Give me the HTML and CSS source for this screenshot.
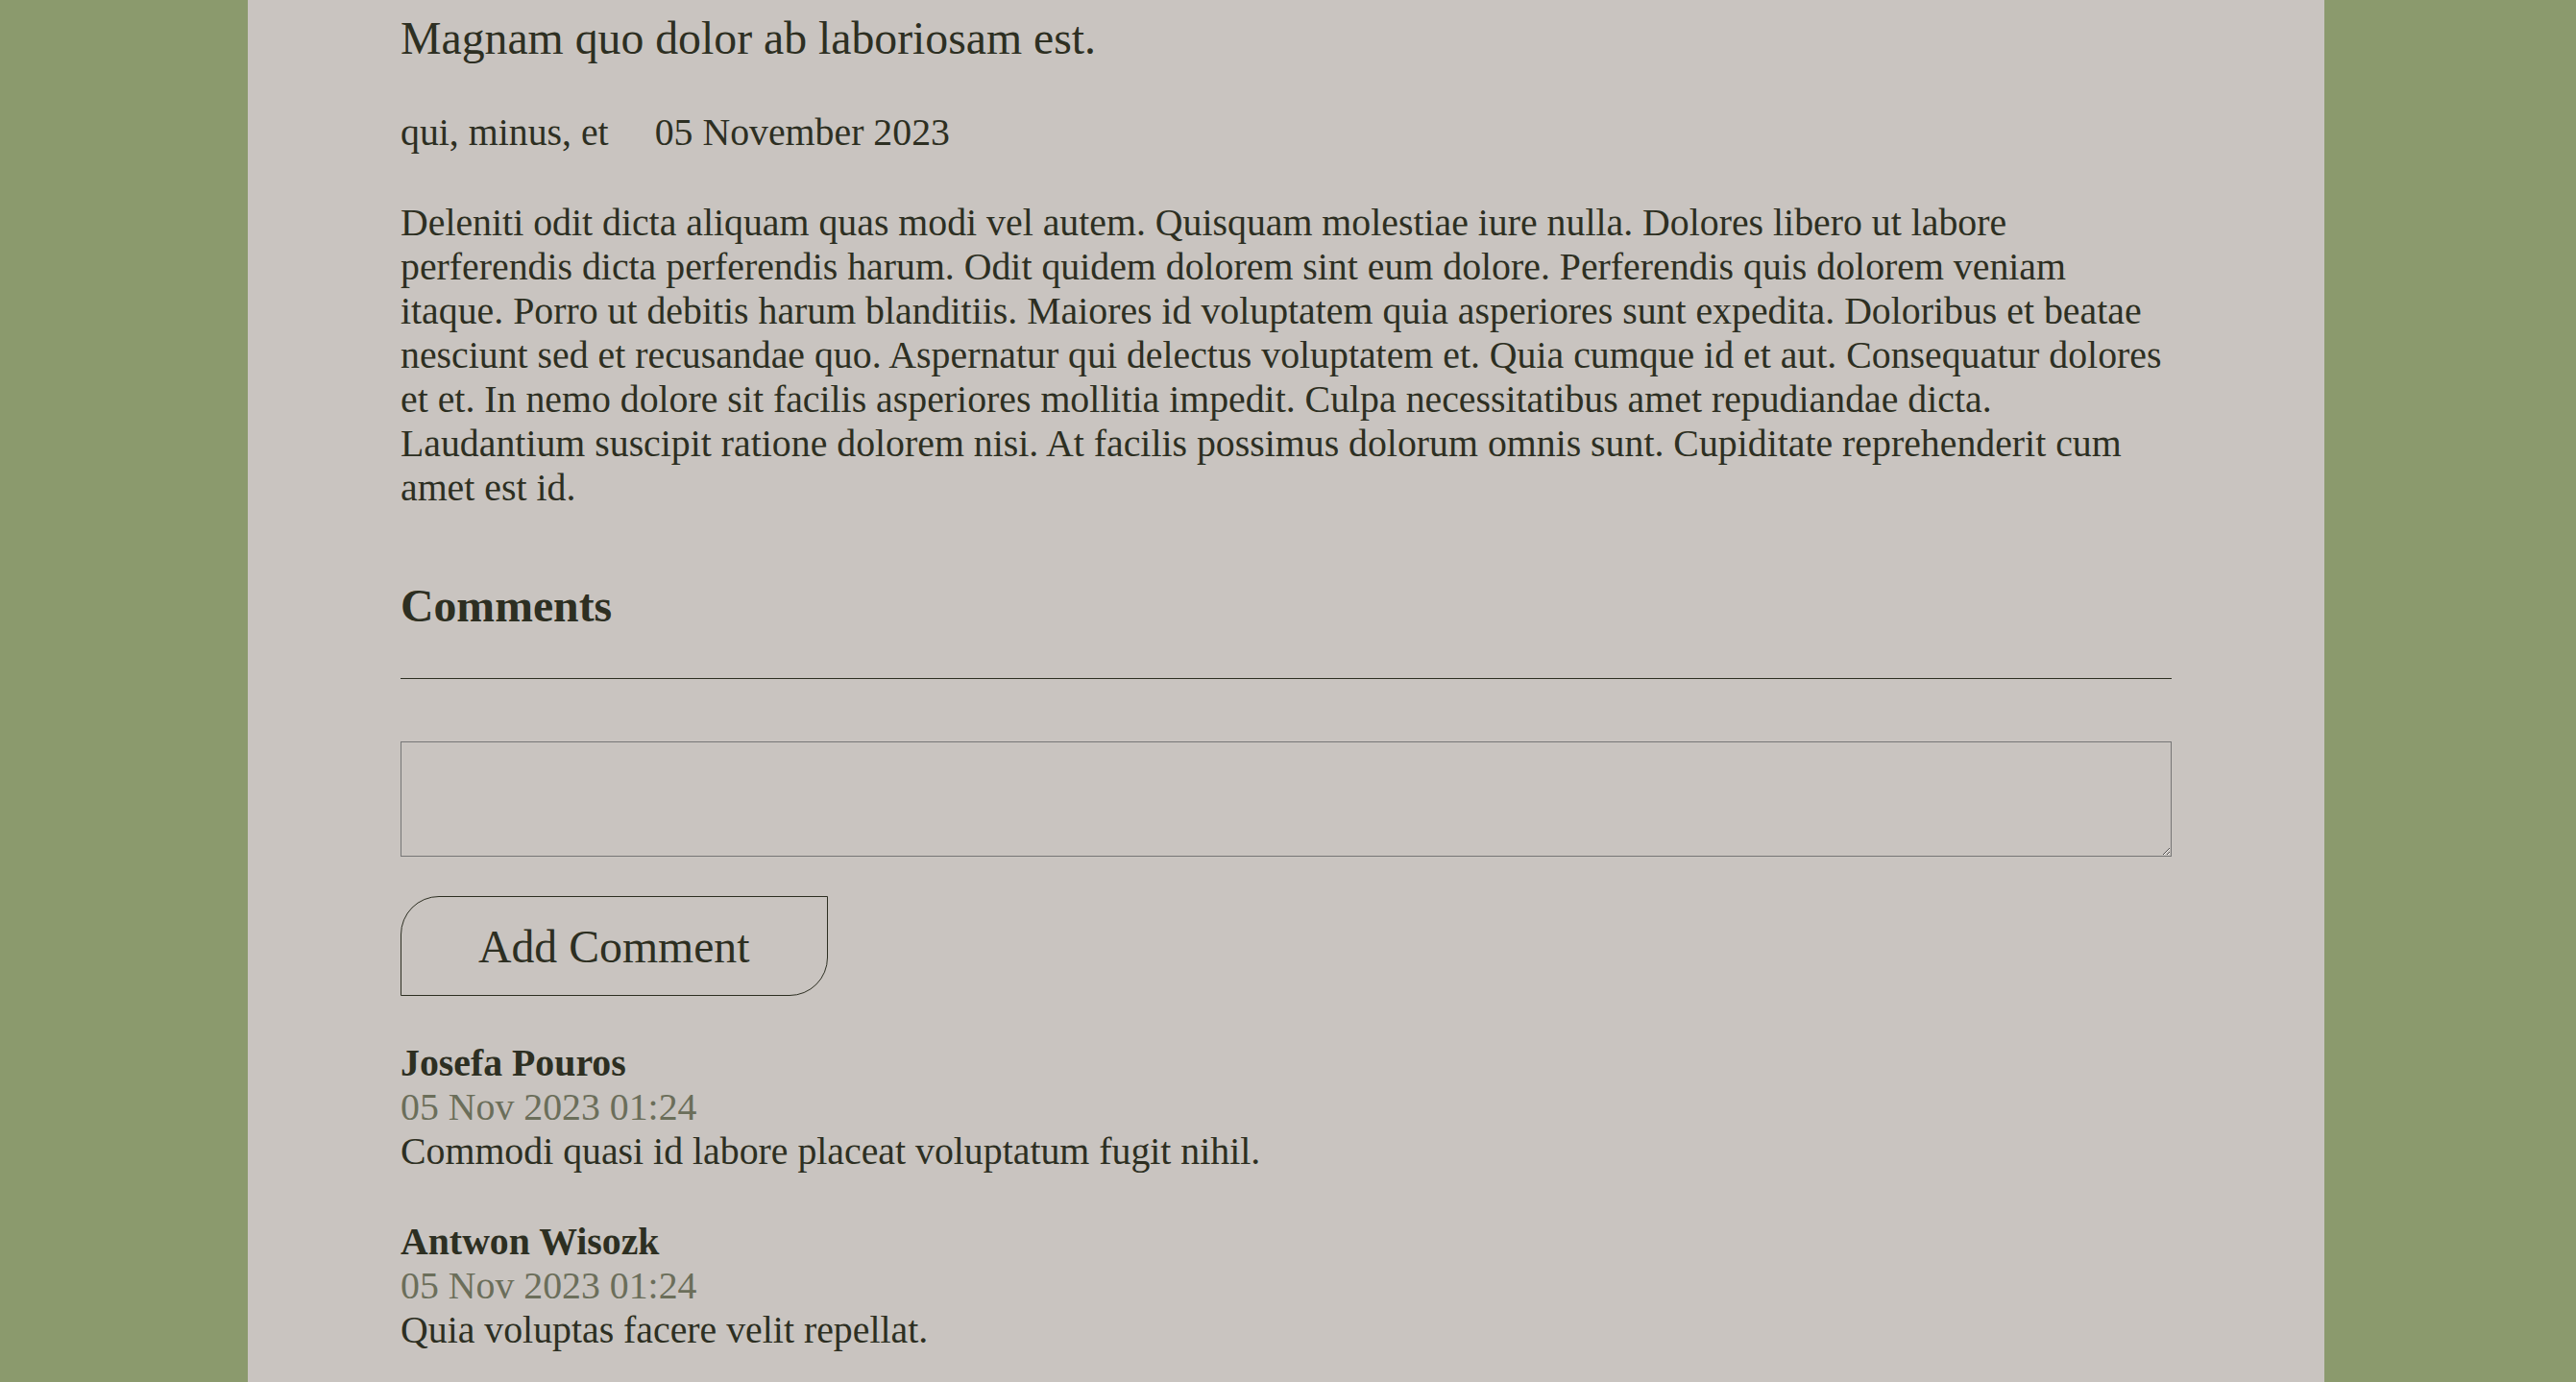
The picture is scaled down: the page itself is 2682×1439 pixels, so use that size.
FILE: index.html
```html
<!DOCTYPE html>
<html lang="en">
<head>
<meta charset="utf-8">
<title>Magnam quo dolor ab laboriosam est.</title>
<link rel="stylesheet" href="styles.css">
</head>
<body>
<main class="panel">
  <article class="post">
    <h1 class="post-title">Magnam quo dolor ab laboriosam est.</h1>
    <div class="post-meta">
      <span class="post-tags">qui, minus, et</span>
      <span class="post-date">05 November 2023</span>
    </div>
    <p class="post-body">Deleniti odit dicta aliquam quas modi vel autem. Quisquam molestiae iure nulla. Dolores libero ut labore perferendis dicta perferendis harum. Odit quidem dolorem sint eum dolore. Perferendis quis dolorem veniam itaque. Porro ut debitis harum blanditiis. Maiores id voluptatem quia asperiores sunt expedita. Doloribus et beatae nesciunt sed et recusandae quo. Aspernatur qui delectus voluptatem et. Quia cumque id et aut. Consequatur dolores et et. In nemo dolore sit facilis asperiores mollitia impedit. Culpa necessitatibus amet repudiandae dicta. Laudantium suscipit ratione dolorem nisi. At facilis possimus dolorum omnis sunt. Cupiditate reprehenderit cum amet est id.</p>
  </article>
  <section class="comments">
    <h2 class="comments-title">Comments</h2>
    <hr class="divider">
    <form class="comment-form">
      <textarea class="comment-input"></textarea>
      <button type="button" class="comment-button">Add Comment</button>
    </form>
    <div class="comment-list">
      <div class="comment">
        <div class="comment-author">Josefa Pouros</div>
        <div class="comment-date">05 Nov 2023 01:24</div>
        <div class="comment-text">Commodi quasi id labore placeat voluptatum fugit nihil.</div>
      </div>
      <div class="comment">
        <div class="comment-author">Antwon Wisozk</div>
        <div class="comment-date">05 Nov 2023 01:24</div>
        <div class="comment-text">Quia voluptas facere velit repellat.</div>
      </div>
    </div>
  </section>
</main>
</body>
</html>
```
FILE: styles.css
```css
html, body {
  margin: 0;
  padding: 0;
}
body {
  background: #8b9a6d;
  color: #2d2f22;
  font-family: "Liberation Serif", "Times New Roman", serif;
  font-size: 39.8px;
  line-height: 46px;
}
.panel {
  background: #c9c4c0;
  margin: 0 262px 0 258px;
  padding: 12px 159px 40px;
  min-height: 100vh;
  box-sizing: border-box;
}
.post-title {
  margin: 0 0 48px;
  font-size: 47.76px;
  line-height: 55px;
  font-weight: normal;
}
.post-meta {
  display: flex;
  gap: 48px;
  margin: 0 0 48px;
}
.post-body {
  margin: 0 0 72px;
}
.comments-title {
  margin: 0 0 48px;
  font-size: 47.76px;
  line-height: 55px;
  font-weight: bold;
}
.divider {
  margin: 0 0 65px;
  border: none;
  border-top: 1px solid #2d2f22;
  height: 0;
}
.comment-form {
  display: flex;
  flex-direction: column;
  align-items: flex-start;
  gap: 41px;
  margin: 0 0 47px;
}
.comment-input {
  display: block;
  width: 100%;
  height: 120px;
  box-sizing: border-box;
  margin: 0;
  background: transparent;
  border: 1px solid #767676;
  font-family: "Liberation Serif", serif;
  font-size: 24px;
}
.comment-button {
  margin: 0;
  background: transparent;
  color: #2d2f22;
  border: 1px solid #2d2f22;
  border-radius: 40px 0 40px 0;
  font-family: "Liberation Serif", serif;
  font-size: 47.76px;
  line-height: 55px;
  padding: 23.5px 80px;
  cursor: pointer;
}
.comment-list {
  display: flex;
  flex-direction: column;
  gap: 48px;
}
.comment-author {
  font-weight: bold;
}
.comment-date {
  color: #6b6e5a;
}
```
